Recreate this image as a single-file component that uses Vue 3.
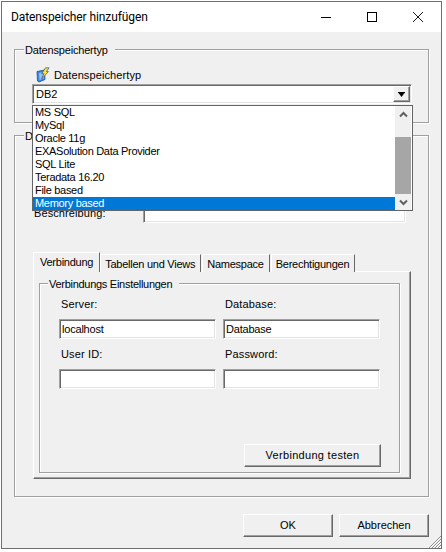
<script setup>
const items = ['MS SQL', 'MySql', 'Oracle 11g', 'EXASolution Data Provider', 'SQL Lite', 'Teradata 16.20', 'File based', 'Memory based']
const tabs = ['Verbindung', 'Tabellen und Views', 'Namespace', 'Berechtigungen']
const fields = [
  { label: 'Server:', value: 'localhost' },
  { label: 'Database:', value: 'Database' },
  { label: 'User ID:', value: '' },
  { label: 'Password:', value: '' },
]
</script>

<template>
  <div class="window">
    <header class="titlebar">
      <span class="title">Datenspeicher hinzufügen</span>
      <div class="controls">
        <span class="ctl"><svg width="10" height="10" viewBox="0 0 10 10"><path d="M0 5.5H10" stroke="#000" /></svg></span>
        <span class="ctl"><svg width="10" height="10" viewBox="0 0 10 10"><rect x="0.5" y="0.5" width="9" height="9" fill="none" stroke="#000" /></svg></span>
        <span class="ctl"><svg width="10" height="10" viewBox="0 0 10 10"><path d="M0 0L10 10M10 0L0 10" stroke="#000" stroke-width="0.9" /></svg></span>
      </div>
    </header>

    <main class="client">
      <section class="group type-group">
        <div class="legend">Datenspeichertyp</div>
        <div class="type-label">
          <svg class="type-icon" width="14" height="16" viewBox="0 0 14 16">
            <path d="M1 4.5L8.5 3L9 12.5L3 15L1.5 14Z" fill="#3f86de" stroke="#1c4f9e" stroke-width="0.8" />
            <path d="M3 6L8 5V11.5L3.5 13Z" fill="#8fc0f2" />
            <path d="M9.5 0.8L13 0.8L10.4 4.6L12.4 4.6L5.6 12L7.8 6.6L5.8 6.6Z" fill="#ffe23c" stroke="#2a4f8f" stroke-width="0.7" />
          </svg>
          <span>Datenspeichertyp</span>
        </div>
        <div class="combo">
          <span class="combo-value">DB2</span>
          <span class="combo-btn"><svg width="7" height="5" viewBox="0 0 7 5"><path d="M0 0H7V1H6.5L3.5 5L0.5 1H0Z" fill="#000" /></svg></span>
          <div class="list">
            <ul class="list-items">
              <li v-for="(item, i) in items" :key="item" :class="{ selected: i === items.length - 1 }">{{ item }}</li>
            </ul>
            <div class="scroll">
              <span class="scroll-arrow"><svg width="9" height="7" viewBox="0 0 9 7"><path d="M1 5.5L4.5 2L8 5.5" fill="none" stroke="#606060" stroke-width="2" /></svg></span>
              <span class="scroll-spacer"></span>
              <span class="scroll-thumb"></span>
              <span class="scroll-arrow"><svg width="9" height="7" viewBox="0 0 9 7"><path d="M1 1.5L4.5 5L8 1.5" fill="none" stroke="#606060" stroke-width="2" /></svg></span>
            </div>
          </div>
        </div>
      </section>

      <section class="group store-group">
        <div class="legend">D</div>
        <div class="desc-row">
          <label class="desc-label">Beschreibung:</label>
          <input class="field desc-input" readonly />
        </div>

        <div class="tabs">
          <div class="tab-strip">
            <span v-for="(tab, i) in tabs" :key="tab" class="tab" :class="{ active: i === 0 }">{{ tab }}</span>
          </div>
          <div class="pane">
            <section class="group conn-group">
              <div class="legend">Verbindungs Einstellungen</div>
              <div class="form">
                <div v-for="f in fields" :key="f.label" class="form-field">
                  <label class="form-label">{{ f.label }}</label>
                  <input class="field" :value="f.value" readonly />
                </div>
              </div>
              <div class="conn-actions">
                <button class="btn test-btn" type="button">Verbindung testen</button>
              </div>
            </section>
          </div>
        </div>
      </section>

      <footer class="footer">
        <button class="btn" type="button">OK</button>
        <button class="btn" type="button">Abbrechen</button>
      </footer>
    </main>

    <svg class="grip" width="13" height="13" viewBox="0 0 13 13">
      <path d="M13 1L1 13M13 4L4 13M13 7L7 13M13 10L10 13" stroke="#8c8c8c" stroke-width="1" />
      <path d="M13 2L2 13M13 5L5 13M13 8L8 13M13 11L11 13" stroke="#fff" stroke-width="1" />
    </svg>
  </div>
</template>

<style scoped>
.window {
  position: relative;
  box-sizing: border-box;
  width: 441px;
  height: 548px;
  margin: 1px 0 0 1px;
  border: 1px solid #6e6e6e;
  background: #f0f0f0;
  color: #000;
  font: 11px/13px "Liberation Sans", Arial, sans-serif;
  display: flex;
  flex-direction: column;
}
.titlebar {
  height: 30px;
  flex: none;
  background: #fff;
  display: flex;
  align-items: center;
  justify-content: space-between;
  padding-left: 9px;
}
.title {
  font: 12px/16px Roboto, sans-serif;
  letter-spacing: -0.1px;
}
.controls {
  display: flex;
}
.ctl {
  width: 46px;
  height: 30px;
  display: flex;
  align-items: center;
  justify-content: center;
}
.client {
  padding: 17px 12px 0;
  flex: 1;
  display: flex;
  flex-direction: column;
}
.group {
  box-sizing: border-box;
  border: 1px solid #a0a0a0;
  box-shadow: 1px 1px 0 #fff, inset 1px 1px 0 #fff;
}
.legend {
  width: fit-content;
  margin: -6px 0 0 9px;
  padding: 0 7px 0 1px;
  background: #f0f0f0;
  line-height: 13px;
  letter-spacing: -0.18px;
}
.type-group {
  height: 74px;
}
.type-label {
  display: flex;
  align-items: center;
  gap: 4px;
  height: 16px;
  margin: 10px 0 0 21px;
  letter-spacing: 0.1px;
}
.type-icon {
  flex: none;
}
.combo {
  position: relative;
  box-sizing: border-box;
  width: 380px;
  height: 20px;
  margin: 1px 0 0 17px;
  border: 1px solid #fff;
  border-top-color: #a0a0a0;
  border-left-color: #a0a0a0;
  background: #fff;
  box-shadow: inset 1px 1px 0 #696969, inset -1px -1px 0 #e3e3e3;
  display: flex;
  align-items: center;
  justify-content: space-between;
  padding: 1px 1px 1px 3px;
}
.combo-btn {
  box-sizing: border-box;
  width: 17px;
  height: 16px;
  background: #f0f0f0;
  border: 1px solid #696969;
  border-top-color: #fff;
  border-left-color: #fff;
  box-shadow: inset -1px -1px 0 #a0a0a0;
  display: flex;
  align-items: center;
  justify-content: center;
}
.list {
  position: absolute;
  z-index: 5;
  left: -1px;
  top: 20px;
  box-sizing: border-box;
  width: 381px;
  height: 106px;
  border: 1px solid #646464;
  background: #fff;
  display: flex;
}
.list-items {
  flex: 1;
  margin: 0;
  padding: 0;
  list-style: none;
}
.list-items li {
  height: 13px;
  line-height: 13px;
  padding-left: 2px;
  letter-spacing: -0.3px;
}
.list-items li.selected {
  background: #0078d7;
  color: #fff;
}
.scroll {
  width: 16px;
  margin-right: 1px;
  background: #f0f0f0;
  display: flex;
  flex-direction: column;
}
.scroll-arrow {
  height: 16px;
  flex: none;
  display: flex;
  align-items: center;
  justify-content: center;
}
.scroll-spacer {
  height: 15px;
  flex: none;
}
.scroll-thumb {
  flex: 1;
  background: #a6a6a6;
}
.store-group {
  height: 362px;
  margin-top: 12px;
}
.desc-row {
  display: flex;
  align-items: center;
  margin: 60px 0 0 19px;
}
.desc-label {
  width: 109px;
  letter-spacing: 0.1px;
}
.field {
  box-sizing: border-box;
  height: 20px;
  width: 100%;
  margin: 0;
  padding: 0 0 0 2px;
  border: 1px solid #fff;
  border-top-color: #a0a0a0;
  border-left-color: #a0a0a0;
  border-radius: 0;
  outline: none;
  background: #fff;
  box-shadow: inset 1px 1px 0 #696969, inset -1px -1px 0 #e3e3e3;
  color: #000;
  font: 11px/13px "Liberation Sans", Arial, sans-serif;
  letter-spacing: -0.2px;
}
.desc-input {
  width: 263px;
}
.tabs {
  width: 378px;
  margin: 29px 0 0 18px;
}
.tab-strip {
  display: flex;
  align-items: flex-end;
  gap: 1px;
  position: relative;
  z-index: 1;
  margin-bottom: -1px;
}
.tab {
  box-sizing: border-box;
  height: 18px;
  padding: 3px 5px 0 4px;
  border: 1px solid #696969;
  border-width: 1px 1px 0 1px;
  border-color: #fff #696969 #fff #fff;
  background: #f0f0f0;
  white-space: nowrap;
  letter-spacing: -0.25px;
}
.tab.active {
  height: 20px;
  padding: 3px 6px 0 6px;
  margin-right: -1px;
}
.pane {
  box-sizing: border-box;
  height: 208px;
  padding: 11px 10px 7px 5px;
  border: 1px solid #696969;
  border-top-color: #fff;
  border-left-color: #fff;
  box-shadow: inset -1px -1px 0 #a0a0a0;
}
.conn-group {
  height: 190px;
  display: flex;
  flex-direction: column;
}
.conn-group .legend {
  margin-left: 8px;
  letter-spacing: -0.28px;
}
.form {
  display: grid;
  grid-template-columns: 157px 157px;
  column-gap: 7px;
  row-gap: 9px;
  margin: 7px 0 0 19px;
}
.form-field {
  display: flex;
  flex-direction: column;
  gap: 8px;
}
.form-label {
  padding-left: 2px;
  letter-spacing: 0.15px;
}
.conn-actions {
  margin-top: auto;
  display: flex;
  justify-content: flex-end;
  padding: 0 18px 5px 0;
}
.btn {
  box-sizing: border-box;
  width: 90px;
  height: 23px;
  margin: 0;
  padding: 0;
  background: #f0f0f0;
  border: 1px solid #696969;
  border-top-color: #fff;
  border-left-color: #fff;
  border-radius: 0;
  box-shadow: inset -1px -1px 0 #a0a0a0;
  color: #000;
  font: 11px/13px "Liberation Sans", Arial, sans-serif;
}
.test-btn {
  width: 137px;
  letter-spacing: 0.3px;
}
.footer {
  display: flex;
  justify-content: flex-end;
  gap: 6px;
  margin: 17px 0 0 0;
}
.grip {
  position: absolute;
  right: 0;
  bottom: 0;
}
</style>

<style>
html, body {
  background: #fff;
}
</style>
